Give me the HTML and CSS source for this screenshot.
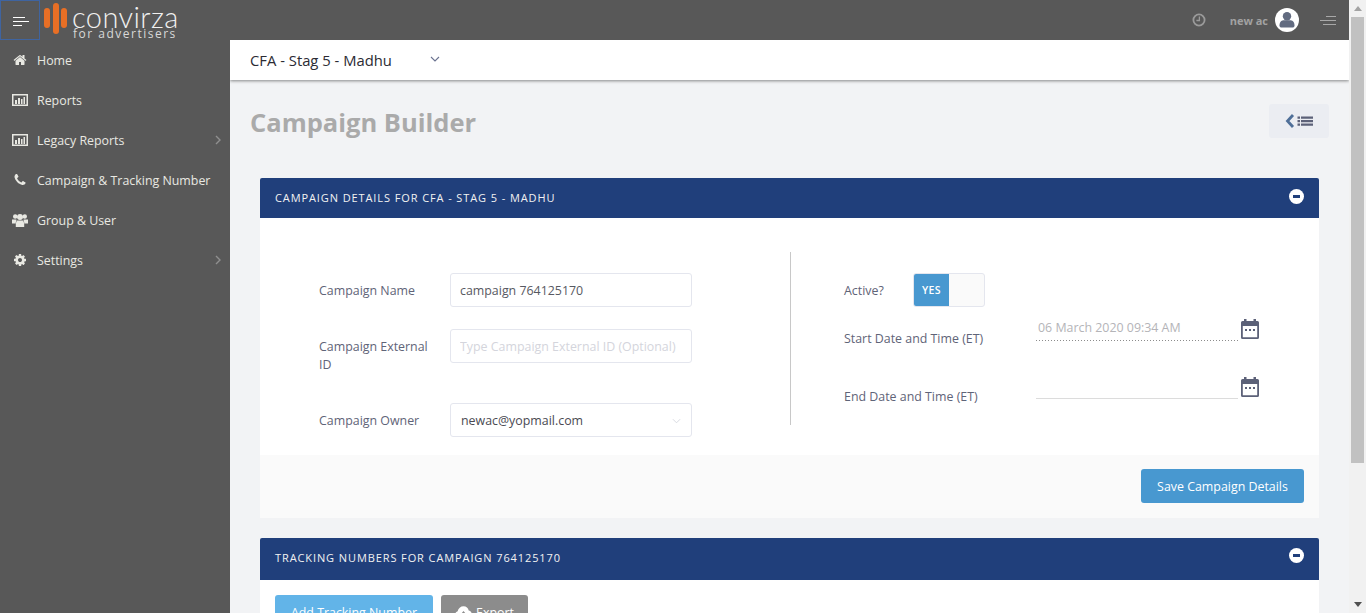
FILE: index.html
```html
<!DOCTYPE html>
<html lang="en">
<head>
    <meta charset="UTF-8">
    <meta name="viewport" content="width=device-width, initial-scale=1.0">
    <title>Campaign Builder</title>
    <link rel="stylesheet" href="styles.css">
</head>
<body>
    <div class="page">
        <header class="header">
            <button class="menu-toggle"><span class="burger"><i class="w12"></i><i></i><i class="w9"></i></span></button>
            <div class="logo">
                <div class="logo-mark"><i></i><i class="tall"></i><i></i></div>
                <div class="logo-text">
                    <div class="logo-name">convirza</div>
                    <div class="logo-sub">for advertisers</div>
                </div>
            </div>
            <div class="header-right">
                <svg class="clock" viewBox="0 0 14 14"><circle cx="7" cy="7" r="5.6" fill="none" stroke="#9a9a9a" stroke-width="1.8"/><path d="M7.4 3.6v3.9H4.4" fill="none" stroke="#9a9a9a" stroke-width="1.3"/></svg>
                <span class="user-name">new ac</span>
                <svg class="avatar" viewBox="0 0 24 24"><circle cx="12" cy="12" r="12" fill="#fff"/><circle cx="12" cy="8.2" r="4.2" fill="#626b80"/><path d="M4.500 17.500c0-4 2.500-5.200 4.500-5.200h6c2 0 4.500 1.200 4.500 5.200 0 1.500-1 2-2 2H6.500c-1 0-2-.5-2-2z" fill="#626b80"/></svg>
                <span class="burger dim"><i class="w10"></i><i></i><i class="w13"></i></span>
            </div>
        </header>
        <div class="layout">
            <nav class="sidebar">
                <a class="nav-item">
                    <svg class="nav-icon" viewBox="0 0 1792 1792"><path d="M1472 992v480q0 26-19 45t-45 19h-384v-384h-256v384h-384q-26 0-45-19t-19-45v-480q0-1 .5-3t.5-3l575-474 575 474q1 2 1 6zm223-69l-62 74q-8 9-21 11h-3q-13 0-21-7l-692-577-692 577q-12 8-24 7-13-2-21-11l-62-74q-8-10-7-23.5t11-21.5l719-599q32-26 76-26t76 26l244 204v-195q0-14 9-23t23-9h192q14 0 23 9t9 23v408l219 182q10 8 11 21.5t-7 23.5z"/></svg>
                    Home
                </a>
                <a class="nav-item">
                    <svg class="nav-icon" viewBox="0 0 16 14"><path d="M0 1h16v12H0zM1.500 2.500v9h13v-9z" fill-rule="evenodd"/><path d="M3 7h2v4H3zM6 5h2v6H6zM9 6h1.500v5H9zM11.500 4H13v7h-1.500z"/></svg>
                    Reports
                </a>
                <a class="nav-item">
                    <svg class="nav-icon" viewBox="0 0 16 14"><path d="M0 1h16v12H0zM1.500 2.500v9h13v-9z" fill-rule="evenodd"/><path d="M3 7h2v4H3zM6 5h2v6H6zM9 6h1.500v5H9zM11.500 4H13v7h-1.500z"/></svg>
                    Legacy Reports
                    <svg class="nav-arrow" viewBox="0 0 6 10"><path d="M1 1l4 4-4 4" fill="none" stroke="#8f8f8f" stroke-width="1.400"/></svg>
                </a>
                <a class="nav-item">
                    <svg class="nav-icon" viewBox="0 0 1792 1792"><path d="M1600 1240q0 27-10 70.5t-21 68.5q-21 50-122 106-94 51-186 51-27 0-53-3.5t-57.5-12.5-47-14.5-55.5-20.5-49-18q-98-35-175-83-127-79-264-216t-216-264q-48-77-83-175-3-9-18-49t-20.5-55.5-14.5-47-12.5-57.5-3.5-53q0-92 51-186 56-101 106-122 25-11 68.5-21t70.5-10q14 0 21 3 18 6 53 76 11 19 30 54t35 63.5 31 53.5q3 4 17.5 25t21.5 35.5 7 28.5q0 20-28.5 50t-62 55-62 53-28.5 46q0 9 5 22.5t8.5 20.5 14 24 11.500 19q76 137 174 235t235 174q2 1 19 11.500t24 14 20.5 8.5 22.5 5q18 0 46-28.5t53-62 55-62 50-28.5q14 0 28.5 7t35.5 21.5 25 17.5q25 15 53.5 31t63.5 35 54 30q70 35 76 53 3 7 3 21z"/></svg>
                    Campaign &amp; Tracking Number
                </a>
                <a class="nav-item">
                    <svg class="nav-icon" viewBox="0 0 16 14"><circle cx="3.200" cy="3.500" r="2.200"/><circle cx="12.800" cy="3.500" r="2.200"/><circle cx="8" cy="4" r="3"/><path d="M0 6.500h4.500L3.600 10.500H0zM16 6.500h-4.500l.9 4H16zM4.800 7.500h6.400l1 3v3.500H3.800v-3.500z"/></svg>
                    Group &amp; User
                </a>
                <a class="nav-item">
                    <svg class="nav-icon" viewBox="0 0 1792 1792"><path d="M1152 896q0-106-75-181t-181-75-181 75-75 181 75 181 181 75 181-75 75-181zm512-109v222q0 12-8 23t-20 13l-185 28q-19 54-39 91 35 50 107 138 10 12 10 25t-9 23q-27 37-99 108t-94 71q-12 0-26-9l-138-108q-44 23-91 38-16 136-29 186-7 28-36 28h-222q-14 0-24.500-8.500t-11.500-21.500l-28-184q-49-16-90-37l-141 107q-10 9-25 9-14 0-25-11-126-114-165-168-7-10-7-23 0-12 8-23 15-21 51-66.500t54-70.500q-27-50-41-99l-183-27q-13-2-21-12.500t-8-23.500v-222q0-12 8-23t19-13l186-28q14-46 39-92-40-57-107-138-10-12-10-24 0-10 9-23 26-36 98.500-107.500t94.500-71.500q13 0 26 10l138 107q44-23 91-38 16-136 29-186 7-28 36-28h222q14 0 24.500 8.500t11.500 21.500l28 184q49 16 90 37l142-107q9-9 24-9 13 0 25 10 129 119 165 170 7 8 7 22 0 12-8 23-15 21-51 66.500t-54 70.500q26 50 41 98l183 28q13 2 21 12.500t8 23.500z"/></svg>
                    Settings
                    <svg class="nav-arrow" viewBox="0 0 6 10"><path d="M1 1l4 4-4 4" fill="none" stroke="#8f8f8f" stroke-width="1.400"/></svg>
                </a>
            </nav>
            <main class="main">
                <div class="topbar">
                    <span class="org-name">CFA - Stag 5 - Madhu</span>
                    <svg class="org-arrow" viewBox="0 0 10 6"><path d="M1 1l4 4 4-4" fill="none" stroke="#6b7390" stroke-width="1.100"/></svg>
                </div>
                <div class="title-row">
                    <h1 class="page-title">Campaign Builder</h1>
                    <button class="list-btn">
                        <svg viewBox="0 0 28 14" width="28" height="14"><path d="M8 1L2.500 7 8 13" fill="none" stroke="#4f6f98" stroke-width="2.800"/><path d="M12.500 2.500H15v2.200h-2.500zM16 2.500h12v2.200H16zM12.500 6H15v2.200h-2.500zM16 6h12v2.200H16zM12.500 9.500H15v2.200h-2.500zM16 9.500h12v2.200H16z" fill="#5c6178"/></svg>
                    </button>
                </div>

                <section class="portlet">
                    <div class="portlet-head">
                        <span class="portlet-title">Campaign Details for CFA - Stag 5 - Madhu</span>
                        <span class="collapse"></span>
                    </div>
                    <div class="portlet-body">
                        <div class="form-left">
                            <div class="form-row">
                                <label class="form-label">Campaign Name</label>
                                <input class="form-input" type="text" value="campaign 764125170">
                            </div>
                            <div class="form-row tall-gap">
                                <label class="form-label">Campaign External ID</label>
                                <input class="form-input" type="text" placeholder="Type Campaign External ID (Optional)">
                            </div>
                            <div class="form-row last">
                                <label class="form-label">Campaign Owner</label>
                                <div class="form-input select">
                                    newac@yopmail.com
                                    <svg class="select-arrow" viewBox="0 0 10 6"><path d="M1 1l4 4 4-4" fill="none" stroke="#d4d6de" stroke-width="1"/></svg>
                                </div>
                            </div>
                        </div>
                        <div class="divider"></div>
                        <div class="form-right">
                            <div class="active-row">
                                <label class="active-label">Active?</label>
                                <div class="switch"><span class="switch-on">YES</span></div>
                            </div>
                            <div class="date-row">
                                <label class="date-label">Start Date and Time (ET)</label>
                                <div class="date-field dotted">06 March 2020 09:34 AM</div>
                                <svg class="cal-icon" viewBox="0 0 18 20"><path d="M3 0h2.500v2h7V0H15v2h1.500A1.500 1.500 0 0 1 18 3.500v15a1.500 1.500 0 0 1-1.500 1.500h-15A1.500 1.500 0 0 1 0 18.500v-15A1.500 1.500 0 0 1 1.500 2H3zM1.800 7v11.200h14.400V7z" fill-rule="evenodd"/><path d="M4 10h2v2H4zM8 10h2v2H8zM12 10h2v2h-2z"/></svg>
                            </div>
                            <div class="date-row">
                                <label class="date-label">End Date and Time (ET)</label>
                                <div class="date-field"></div>
                                <svg class="cal-icon" viewBox="0 0 18 20"><path d="M3 0h2.500v2h7V0H15v2h1.500A1.500 1.500 0 0 1 18 3.500v15a1.500 1.500 0 0 1-1.500 1.500h-15A1.500 1.500 0 0 1 0 18.500v-15A1.500 1.500 0 0 1 1.500 2H3zM1.800 7v11.200h14.400V7z" fill-rule="evenodd"/><path d="M4 10h2v2H4zM8 10h2v2H8zM12 10h2v2h-2z"/></svg>
                            </div>
                        </div>
                    </div>
                    <div class="portlet-foot">
                        <button class="btn btn-save">Save Campaign Details</button>
                    </div>
                </section>

                <section class="portlet">
                    <div class="portlet-head second">
                        <span class="portlet-title">Tracking Numbers for Campaign 764125170</span>
                        <span class="collapse"></span>
                    </div>
                    <div class="tracking-body">
                        <button class="btn btn-add">Add Tracking Number</button>
                        <button class="btn btn-export">
                            <svg viewBox="0 0 18 13" width="17" height="13"><path d="M9 0c3 0 5 2 5.500 4.500C16.500 5 18 6.800 18 9c0 2.500-2 4-4 4H4c-2.200 0-4-1.800-4-4 0-1.800 1-3.200 2.800-3.800C3.500 2.200 6 0 9 0z" fill="#fff"/><path d="M9 5l3 3.500h-2V12H8V8.500H6z" fill="#8c8c8c"/></svg>
                            Export
                        </button>
                    </div>
                </section>
            </main>
        </div>
    </div>
    <div class="scrollbar">
        <span class="scroll-up"></span>
        <div class="scroll-thumb"></div>
        <span class="scroll-down"></span>
    </div>
</body>
</html>
```

FILE: styles.css
```css
* {
    box-sizing: border-box;
}

html, body {
    height: 100%;
    margin: 0;
    overflow: hidden;
}

body {
    display: flex;
    font-family: "Open Sans", Arial, sans-serif;
    font-size: 12.4px;
    background-color: #f2f3f5;
    color: #5f6478;
}

.page {
    flex: 1;
    min-width: 0;
    display: flex;
    flex-direction: column;
}

/* header */
.header {
    height: 40px;
    flex: none;
    display: flex;
    align-items: center;
    background: #585858;
}

.menu-toggle {
    width: 40px;
    height: 40px;
    padding: 3px 0 0 12px;
    display: flex;
    align-items: center;
    background: none;
    border: 1px solid #3f64a0;
}

.burger {
    width: 16px;
    display: flex;
    flex-direction: column;
    gap: 3px;
    align-items: flex-start;
}

.burger i {
    display: block;
    width: 100%;
    height: 1px;
    background: #fff;
}

.burger i.w12 {
    width: 12px;
}

.burger i.w9 {
    width: 9px;
}

.burger i.w10 {
    width: 10px;
}

.burger i.w13 {
    width: 13px;
}

.burger.dim {
    align-items: flex-end;
}

.burger.dim i {
    background: #a8a8a8;
}

.logo {
    display: flex;
    align-items: flex-start;
    margin-left: 4px;
    height: 40px;
}

.logo-mark {
    display: flex;
    gap: 2.500px;
    align-items: center;
    height: 36px;
}

.logo-mark i {
    display: block;
    width: 6px;
    height: 20px;
    border-radius: 3px;
    background: #e86f25;
}

.logo-mark i.tall {
    height: 31px;
}

.logo-text {
    margin-left: 5px;
    color: #f0f0f0;
}

.logo-name {
    font-family: "Lato", sans-serif;
    font-weight: 300;
    font-size: 29px;
    line-height: 24px;
    letter-spacing: 0.4px;
    margin-top: 5px;
}

.logo-sub {
    font-size: 12px;
    line-height: 9px;
    letter-spacing: 1.5px;
    color: #d8d8d8;
    margin-left: 1px;
}

.header-right {
    margin-left: auto;
    display: flex;
    align-items: center;
    padding-right: 13px;
}

.clock {
    width: 14px;
    height: 14px;
    margin-right: 24px;
}

.user-name {
    font-size: 11px;
    font-weight: 700;
    color: #a2a2a2;
    margin-right: 7px;
}

.avatar {
    width: 24px;
    height: 24px;
    margin-right: 21px;
}

/* sidebar */
.layout {
    flex: 1;
    min-height: 0;
    display: flex;
}

.sidebar {
    width: 230px;
    flex: none;
    background: #585858;
}

.nav-item {
    height: 40px;
    display: flex;
    align-items: center;
    padding: 0 8px 0 12px;
    color: #e8e8e2;
    font-size: 12.4px;
}

.nav-icon {
    width: 16px;
    height: 14px;
    margin-right: 9px;
    fill: #e8e8e2;
    flex: none;
}

.nav-arrow {
    width: 6px;
    height: 10px;
    margin-left: auto;
    margin-right: 1px;
}

/* main */
.main {
    flex: 1;
    min-width: 0;
    overflow: hidden;
}

.topbar {
    height: 40px;
    display: flex;
    align-items: center;
    padding-left: 20px;
    background: #fff;
    box-shadow: 0 1px 3px rgba(0, 0, 0, 0.45);
    position: relative;
}

.org-name {
    font-size: 14.8px;
    color: #2b2b33;
}

.org-arrow {
    width: 10px;
    height: 6px;
    margin-left: 38px;
    margin-top: -2px;
}

.title-row {
    display: flex;
    justify-content: space-between;
    align-items: center;
    height: 98px;
    padding: 0 20px 16px;
}

.page-title {
    margin: 1px 0 0;
    font-size: 25.5px;
    font-weight: 700;
    color: #aaaaaa;
}

.list-btn {
    width: 60px;
    height: 34px;
    padding: 0;
    display: flex;
    align-items: center;
    justify-content: center;
    background: #ebedf2;
    border: none;
    border-radius: 3px;
}

/* portlets */
.portlet {
    margin: 0 30px 20px;
}

.portlet-head {
    height: 40px;
    display: flex;
    align-items: center;
    justify-content: space-between;
    padding: 0 15px;
    background: #203f7b;
    border-radius: 2px 2px 0 0;
}

.portlet-head.second {
    height: 42px;
}

.portlet-title {
    font-size: 11px;
    font-weight: 400;
    letter-spacing: 0.9px;
    text-transform: uppercase;
    color: #f2f2f2;
    margin-top: -2px;
}

.second .portlet-title {
    margin-top: -4px;
}

.collapse {
    width: 15px;
    height: 15px;
    margin-top: -4px;
    border-radius: 50%;
    background: #fff;
    display: flex;
    align-items: center;
    justify-content: center;
}

.second .collapse {
    margin-top: -8px;
}

.collapse::before {
    content: "";
    width: 7px;
    height: 3px;
    background: #203f7b;
}

.portlet-body {
    display: flex;
    align-items: flex-start;
    padding-top: 34px;
    background: #fff;
}

.form-left {
    width: 530px;
    padding: 21px 0 18px 59px;
}

.form-row {
    display: flex;
    align-items: flex-start;
    margin-bottom: 22px;
}

.form-row.tall-gap {
    margin-bottom: 29px;
}

.form-row.last {
    margin-bottom: 0;
}

.form-label {
    width: 131px;
    flex: none;
    padding: 9px 20px 0 0;
    line-height: 18px;
}

.form-input {
    width: 242px;
    height: 34px;
    padding: 1px 10px 0;
    display: flex;
    align-items: center;
    font-family: inherit;
    font-size: 12.4px;
    color: #575962;
    background: #fff;
    border: 1px solid #e4e6ee;
    border-radius: 3px;
}

input.form-input {
    padding-left: 9px;
}

.form-input::placeholder {
    color: #d4d5dc;
}

.select {
    justify-content: space-between;
    color: #4a4a52;
}

.select-arrow {
    width: 9px;
    height: 6px;
}

.divider {
    width: 1px;
    height: 173px;
    background: #c8c8c8;
    flex: none;
}

.form-right {
    flex: 1;
    padding: 21px 0 0 53px;
}

.active-row {
    display: flex;
    align-items: center;
    margin-bottom: 12px;
}

.active-label {
    width: 69px;
}

.switch {
    width: 72px;
    height: 34px;
    display: flex;
    background: #fafafa;
    border: 1px solid #e4e6ee;
    border-radius: 3px;
    overflow: hidden;
}

.switch-on {
    width: 35px;
    display: flex;
    align-items: center;
    justify-content: center;
    font-size: 10.5px;
    font-weight: 600;
    letter-spacing: 0.4px;
    color: #fff;
    background: #4898d0;
}

.date-row {
    display: flex;
    align-items: flex-start;
    margin-bottom: 29px;
}

.date-label {
    width: 192px;
    flex: none;
    padding-top: 11px;
    line-height: 18px;
}

.date-field {
    width: 202px;
    height: 22px;
    padding: 0 2px;
    line-height: 18px;
    color: #b4b4b8;
    border-bottom: 1px solid #dcdcdc;
}

.date-field.dotted {
    border-bottom: none;
    background: repeating-linear-gradient(90deg, #8c8c8c 0 1px, transparent 1px 3px) left bottom / 100% 1px no-repeat;
}

.cal-icon {
    width: 18px;
    height: 20px;
    margin-left: 3px;
    fill: #5c6178;
}

/* buttons */
.portlet-foot {
    height: 63px;
    padding: 14px 15px 0;
    display: flex;
    justify-content: flex-end;
    align-items: flex-start;
    background: #fafafa;
}

.btn {
    height: 34px;
    padding: 0;
    display: inline-flex;
    align-items: center;
    justify-content: center;
    gap: 4px;
    white-space: nowrap;
    font-family: inherit;
    font-size: 12.4px;
    color: #fff;
    border: none;
    border-radius: 3px;
}

.btn-save {
    width: 163px;
    background: #4898d0;
}

.btn-add {
    width: 158px;
    background: #62b4e8;
}

.btn-export {
    width: 87px;
    background: #8c8c8c;
}

.tracking-body {
    display: flex;
    gap: 8px;
    padding: 15px;
    background: #fff;
}

/* scrollbar */
.scrollbar {
    width: 17px;
    flex: none;
    position: relative;
    background: #f1f1f1;
}

.scroll-up {
    position: absolute;
    top: 6px;
    left: 5px;
    border: 4px solid transparent;
    border-top: 0;
    border-bottom: 5px solid #a3a3a3;
}

.scroll-thumb {
    position: absolute;
    top: 17px;
    left: 2px;
    width: 13px;
    height: 446px;
    background: #c1c1c1;
}

.scroll-down {
    position: absolute;
    bottom: 6px;
    left: 5px;
    border: 4px solid transparent;
    border-bottom: 0;
    border-top: 5px solid #505050;
}
```
